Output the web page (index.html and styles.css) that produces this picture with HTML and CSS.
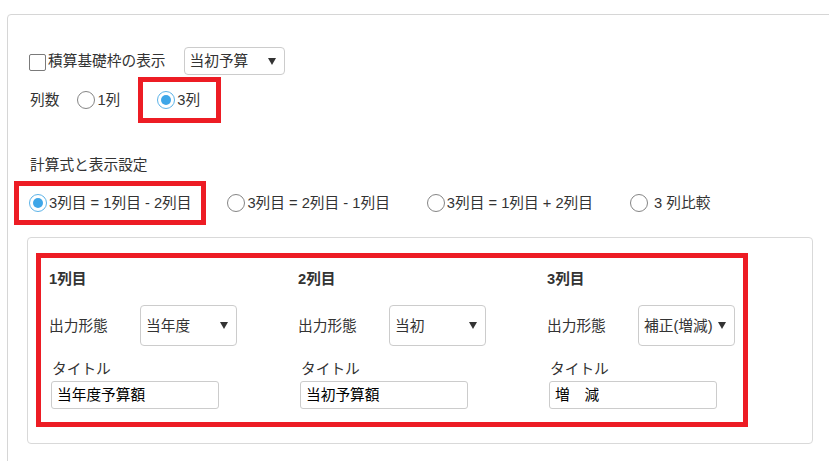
FILE: index.html
```html
<!DOCTYPE html>
<html lang="ja">
<head>
<meta charset="utf-8">
<title>設定</title>
<link rel="stylesheet" href="styles.css">
</head>
<body>
<div class="card">
  <div class="row row-basis">
    <label class="check-item"><span class="checkbox"></span>積算基礎枠の表示</label>
    <div class="select select-top"><span>当初予算</span><span class="caret"></span></div>
  </div>
  <div class="row row-cols">
    <span class="lbl">列数</span>
    <label class="radio-item gap-cols"><span class="radio"></span>1列</label>
    <div class="mark mark-cols">
      <label class="radio-item"><span class="radio on"></span>3列</label>
    </div>
  </div>
  <div class="heading">計算式と表示設定</div>
  <div class="row row-formula">
    <div class="mark mark-formula">
      <label class="radio-item"><span class="radio on"></span>3列目 = 1列目 - 2列目</label>
    </div>
    <label class="radio-item f-first"><span class="radio"></span>3列目 = 2列目 - 1列目</label>
    <label class="radio-item f-next"><span class="radio"></span>3列目 = 1列目 + 2列目</label>
    <label class="radio-item f-next"><span class="radio"></span>&nbsp;3 列比較</label>
  </div>
  <div class="panel">
    <div class="mark mark-panel">
      <div class="col">
        <div class="col-title">1列目</div>
        <div class="col-row">
          <span class="col-lbl">出力形態</span>
          <div class="select select-col"><span>当年度</span><span class="caret"></span></div>
        </div>
        <div class="title-lbl">タイトル</div>
        <div class="text-input">当年度予算額</div>
      </div>
      <div class="col">
        <div class="col-title">2列目</div>
        <div class="col-row">
          <span class="col-lbl">出力形態</span>
          <div class="select select-col"><span>当初</span><span class="caret"></span></div>
        </div>
        <div class="title-lbl">タイトル</div>
        <div class="text-input">当初予算額</div>
      </div>
      <div class="col">
        <div class="col-title">3列目</div>
        <div class="col-row">
          <span class="col-lbl">出力形態</span>
          <div class="select select-col"><span>補正(増減)</span><span class="caret"></span></div>
        </div>
        <div class="title-lbl">タイトル</div>
        <div class="text-input">増　減</div>
      </div>
    </div>
  </div>
</div>
</body>
</html>
```
FILE: styles.css
```css
html, body {
  margin: 0;
  padding: 0;
  background: #ffffff;
  overflow: hidden;
}
body {
  font-family: "Liberation Sans", "Noto Sans CJK JP", sans-serif;
  font-size: 14.7px;
  line-height: 20px;
  color: #333333;
}
.card {
  margin: 14px 0 0 7px;
  width: 900px;
  border: 1px solid #d6d6d6;
  border-radius: 4px;
  padding: 32px 0 40px 21px;
}
.row {
  display: flex;
  align-items: center;
}
.row-basis {
  height: 28px;
}
.check-item {
  display: flex;
  align-items: center;
}
.checkbox {
  box-sizing: border-box;
  width: 17px;
  height: 17px;
  border: 1px solid #7a7a7a;
  border-radius: 2px;
  background: #fff;
  margin-right: 2px;
  margin-top: 3px;
}
.select {
  box-sizing: border-box;
  display: flex;
  align-items: center;
  justify-content: space-between;
  border: 1px solid #cccccc;
  border-radius: 4px;
  background: #fff;
  padding: 0 8px 0 5px;
  white-space: nowrap;
}
.select-top {
  margin-left: 18px;
  width: 101px;
  height: 28px;
}
.caret {
  flex: none;
  width: 0;
  height: 0;
  border-left: 4px solid transparent;
  border-right: 4px solid transparent;
  border-top: 7px solid #333333;
}
.row-cols {
  margin-top: 2px;
  height: 46px;
}
.lbl {
  margin-left: 1px;
}
.radio-item {
  display: flex;
  align-items: center;
  white-space: nowrap;
}
.radio {
  flex: none;
  box-sizing: border-box;
  width: 18px;
  height: 18px;
  border: 1px solid #858585;
  border-radius: 50%;
  background: #fff;
  margin-right: 2px;
  position: relative;
}
.radio.on {
  border-color: #5cb3e8;
}
.radio.on::after {
  content: "";
  position: absolute;
  left: 3px;
  top: 3px;
  width: 10px;
  height: 10px;
  border-radius: 50%;
  background: #3ea6e8;
}
.gap-cols {
  margin-left: 18px;
}
.mark {
  box-sizing: border-box;
  border: 5px solid #ed1c24;
}
.mark-cols {
  margin-left: 18px;
  height: 46px;
  display: flex;
  align-items: center;
  padding: 0 16px 0 14px;
}
.heading {
  margin-top: 32px;
  margin-left: 1px;
}
.row-formula {
  margin-top: 6px;
  height: 44px;
}
.mark-formula {
  margin-left: -15px;
  height: 44px;
  display: flex;
  align-items: center;
  padding: 0 10px;
}
.f-first {
  margin-left: 21px;
}
.f-next {
  margin-left: 37px;
}
.panel {
  margin-top: 12px;
  margin-left: -2px;
  box-sizing: border-box;
  width: 786px;
  border: 1px solid #d9d9d9;
  border-radius: 4px;
  padding: 15px 7px 16px 8px;
}
.mark-panel {
  width: 712px;
  display: grid;
  grid-template-columns: 249px 249px auto;
  padding: 11px 8px 13px 8px;
}
.col-title {
  font-weight: bold;
}
.col-row {
  margin-top: 16px;
  display: flex;
  align-items: center;
}
.col-lbl {
  width: 91px;
  flex: none;
}
.select-col {
  width: 97px;
  height: 41px;
  flex: none;
}
.title-lbl {
  margin-top: 13px;
  padding-left: 3px;
}
.text-input {
  box-sizing: border-box;
  margin-top: 2px;
  margin-left: 2px;
  width: 168px;
  height: 28px;
  border: 1px solid #cccccc;
  border-radius: 3px;
  padding-left: 5px;
  line-height: 26px;
  color: #000000;
  background: #fff;
}
```
